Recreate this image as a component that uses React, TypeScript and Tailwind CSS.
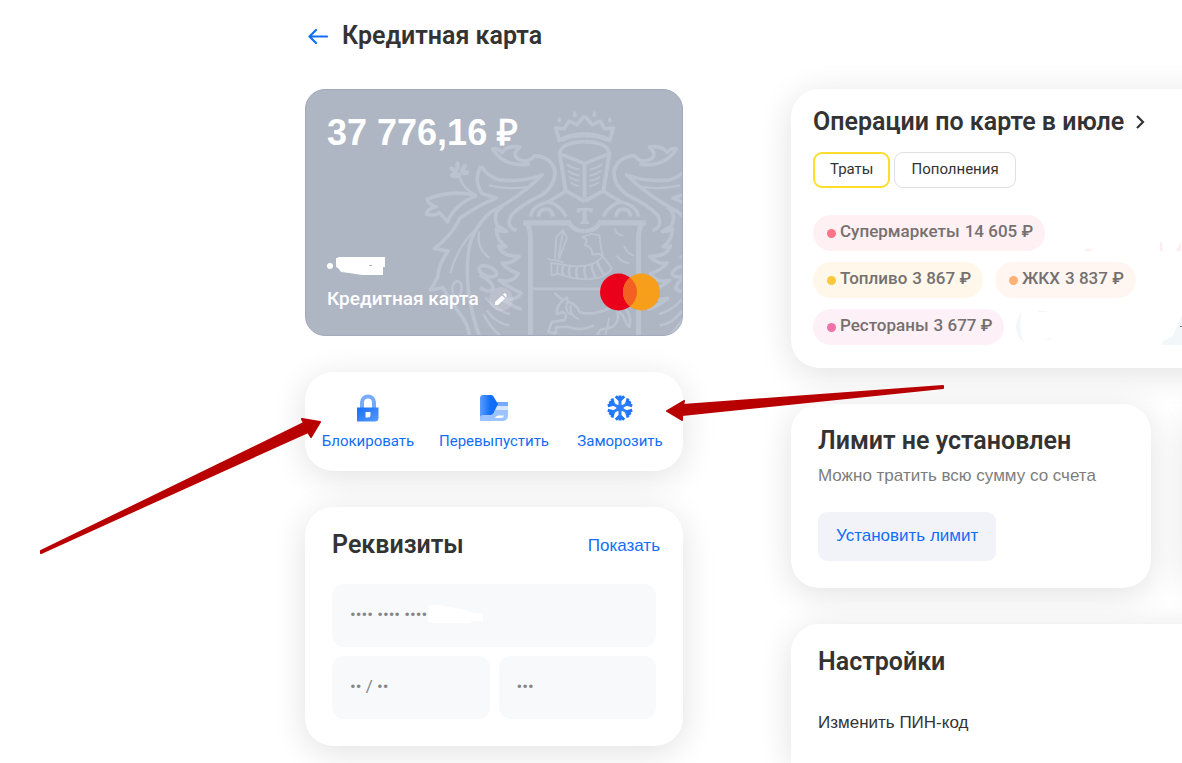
import React from 'react';

interface ActionProps {
  label: string;
  icon: React.ReactNode;
}

interface Expense {
  name: string;
  amount: string;
  bg: string;
  dot: string;
}

const expenseRows: Expense[][] = [
  [{ name: 'Супермаркеты', amount: '14 605 ₽', bg: 'bg-[#fff0f3]', dot: 'bg-[#ff7389]' }],
  [
    { name: 'Топливо', amount: '3 867 ₽', bg: 'bg-[#fff8ea]', dot: 'bg-[#fac83c]' },
    { name: 'ЖКХ', amount: '3 837 ₽', bg: 'bg-[#fff6f1]', dot: 'bg-[#ffb173]' },
  ],
  [{ name: 'Рестораны', amount: '3 677 ₽', bg: 'bg-[#fdf0f6]', dot: 'bg-[#f073a8]' }],
];

const panel = 'bg-white shadow-[0_6px_34px_rgba(0,0,0,0.12)]';
const bodyText = "font-['Liberation_Sans',sans-serif] text-[17px] leading-6";
const field = 'flex h-[63px] items-center rounded-xl bg-[#f8f9fb] px-[18px] pb-[3px]';

const BackIcon = () => (
  <svg width="20" height="16" viewBox="0 0 20 16" fill="none" stroke="#126df7" strokeWidth="2.2" strokeLinecap="round" strokeLinejoin="round">
    <path d="M19 8.500H2M8 2L1.500 8.500L8 15" />
  </svg>
);

const LockIcon = () => (
  <svg width="28" height="28" viewBox="0 0 28 28" fill="none">
    <defs>
      <linearGradient id="lock" x1="0" y1="0" x2="1" y2="1">
        <stop offset="0" stopColor="#126df7" />
        <stop offset="1" stopColor="#5a9bff" />
      </linearGradient>
    </defs>
    <path d="M8 15V8.500a6 6 0 0 1 12 0V15" stroke="#78aafb" strokeWidth="4" />
    <path d="M3 13.500h21.500v10.500a3.500 3.500 0 0 1-3.500 3.500H3z" fill="url(#lock)" />
    <path d="M11.500 18h5v3q0 2.500-2.500 2.500h-2.500z" fill="#fff" />
  </svg>
);

const ReissueIcon = () => (
  <svg width="28" height="28" viewBox="0 0 28 28" fill="none">
    <defs>
      <linearGradient id="folder" x1="0" y1="0" x2="1" y2="0">
        <stop offset="0" stopColor="#5a9bff" />
        <stop offset="0.6" stopColor="#126df7" />
      </linearGradient>
    </defs>
    <path d="M12 8h16v4H12z" fill="#78aafb" />
    <path d="M12 12h16v4H12z" fill="#d6e5ff" />
    <path d="M0 27V24q0-3 3-3h8l4-5h13v5q0 6-6 6z" fill="#9cc3ff" />
    <path d="M0 24V4q0-3 3-3h8q1.500 0 2.300 1.200L18 10l-4.500 9q-1 2-3 2H4q-4 0-4 3z" fill="url(#folder)" />
    <path d="M18 21.500h6q-.5 2.500-3 2.500h-6q0-1.500 3-2.500z" fill="#fff" />
  </svg>
);

const SnowflakeIcon = () => (
  <svg width="28" height="28" viewBox="0 0 28 28" fill="none" stroke="url(#snow)" strokeWidth="3">
    <defs>
      <linearGradient id="snow" gradientUnits="userSpaceOnUse" x1="4" y1="2" x2="16" y2="28">
        <stop offset="0" stopColor="#126df7" />
        <stop offset="1" stopColor="#5a9bff" />
      </linearGradient>
    </defs>
    {[0, 60, 120, 180, 240, 300].map((angle) => (
      <path key={angle} d="M14 14V1.500M9.800 2.300L14 6.500L18.200 2.300" transform={`rotate(${angle} 14 14)`} />
    ))}
    <circle cx="14" cy="14" r="3.500" fill="#2f7ffa" stroke="none" />
  </svg>
);

const CrestHalf = () => (
  <g>
    {/* crown and helmet */}
    <path d="M525 146Q480 146 449 166L438 129L464 131L478 108L502 119L525 92" />
    <path d="M455 168Q480 154 525 153" strokeWidth="7" />
    <path d="M448 94Q456 102 455 108Q449 116 443 108Q442 102 448 94ZM494 76Q504 86 502 92Q495 101 489 92Q489 84 494 76Z" className="fill-current" stroke="none" />
    <path d="M525 170Q455 172 450 206L525 236V340" />
    <path d="M450 206L468 318L525 350" strokeWidth="12" />
    <path d="M472 238Q486 250 510 254M474 258Q488 268 510 272M478 276Q490 286 510 288M482 292Q494 302 510 304" strokeWidth="6" />
    {/* collar */}
    <path d="M468 320L415 352Q368 362 362 396M415 352Q448 358 470 396" />
    <path d="M386 396Q388 374 408 374T430 396" strokeWidth="12" />
    <path d="M525 440Q484 438 476 406" strokeWidth="13" />
    <path d="M340 415H478" strokeWidth="16" />
    <path d="M349 412Q362 432 362 460V760" strokeWidth="15" />
    {/* plumes */}
    <path d="M360 238Q282 248 248 192Q264 188 276 202Q292 180 330 186Q302 210 328 224Q356 236 374 212Q424 216 436 258Q438 302 394 332Q334 360 304 392Q286 426 320 438" />
    <path d="M214 244Q188 284 216 326L258 340Q192 368 150 400Q122 456 72 492L114 500Q84 540 82 580L60 618L98 610Q122 654 150 690Q174 720 178 756" />
    <path d="M214 244Q232 276 270 286Q340 292 398 270Q340 330 240 384Q178 442 174 512Q162 630 208 756" />
    <path d="M236 302Q300 316 350 306M200 432Q146 478 120 566M208 440Q196 490 238 520" strokeWidth="7" />
    <path d="M276 366Q246 386 262 424L290 440Q268 442 260 432Q258 466 288 486Q274 490 266 484Q274 516 328 516Q304 540 276 536Q290 556 326 568Q308 598 268 588Q296 610 334 626Q318 654 274 642Q308 668 336 676" />
    <path d="M208 548Q222 538 248 552Q276 574 242 578Q202 568 208 548M208 572Q246 588 250 612Q238 630 210 610" />
    <path d="M138 590Q160 590 152 626Q134 660 130 632Q120 604 138 590M226 640Q260 680 300 690M230 680Q262 720 298 724M220 690Q244 734 270 754" strokeWidth="8" />
    {/* leaf and flower */}
    <path d="M200 332Q120 314 50 344Q56 362 78 366Q50 372 48 388Q72 396 88 384Q98 396 112 412Q132 360 200 332" />
    <path d="M200 332Q150 306 150 274" strokeWidth="7" />
    <g className="fill-current" stroke="none">
      <ellipse cx="142" cy="243" rx="7" ry="14" />
      <ellipse cx="130" cy="254" rx="14" ry="7" transform="rotate(25 130 254)" />
      <ellipse cx="160" cy="250" rx="15" ry="7" transform="rotate(-60 160 250)" />
      <ellipse cx="164" cy="263" rx="14" ry="8" />
      <ellipse cx="136" cy="271" rx="17" ry="10" />
    </g>
  </g>
);

const Crest = () => (
  <svg className="absolute inset-0 h-full w-full text-[#bbc2d0]" viewBox="0 0 378 247" preserveAspectRatio="xMaxYMax slice" aria-hidden="true">
    <g transform="translate(105 -4) scale(.33333)" fill="none" stroke="currentColor" strokeWidth="11" strokeLinejoin="round">
      <CrestHalf />
      <g transform="translate(1050 0) scale(-1 1)">
        <CrestHalf />
      </g>
      <path d="M502 370H549V384H541L538 378H532V408L539 412V418H512V412L519 408V378H513L510 384H502Z" className="fill-current" stroke="none" />
      <path d="M370 614H690" strokeWidth="8" />
      {/* arm with sword */}
      <path d="M436 522L440 458L460 436L472 460L448 524M460 440L446 520M414 520Q420 530 434 526L462 534M424 536L426 572L442 570L444 538Z" strokeWidth="6" />
      <path d="M444 538Q510 552 546 540Q570 530 580 516M444 568Q510 592 560 582Q592 576 610 550" strokeWidth="6" />
      <path d="M462 540Q454 556 462 574M482 544Q474 560 482 578M504 546Q496 562 504 582M526 544Q522 562 530 582M546 538Q546 556 558 580M562 528Q568 550 584 570" strokeWidth="8" />
      <path d="M580 516Q574 492 570 452L546 448L518 458Q540 462 526 482Q550 488 548 510L570 508L580 516L608 552" strokeWidth="6" />
      <path d="M616 432Q620 452 642 454M644 484Q654 508 674 514M622 514Q640 536 660 536" strokeWidth="6" />
      {/* unicorn */}
      <path d="M434 626L460 648L472 640L474 652Q504 662 510 684Q540 694 586 678Q614 668 620 650Q640 648 650 676Q668 700 660 728Q650 720 644 700Q632 680 624 684Q632 710 610 728L572 738L562 756M460 648Q440 664 442 690L460 684Q476 690 464 708L426 714L416 744L438 748L440 730L476 728Q510 744 554 724" strokeWidth="8" />
      <path d="M474 652Q462 682 486 692M484 662Q476 690 508 706M600 700L588 752" strokeWidth="6" />
    </g>
  </svg>
);

const MastercardLogo = () => (
  <svg width="60" height="38" viewBox="0 0 60 38" role="img" aria-label="Mastercard">
    <circle cx="18.500" cy="19" r="18.500" fill="#eb001b" />
    <circle cx="41.500" cy="19" r="18.500" fill="#f79e1b" />
    <path d="M30 4.500a18.500 18.500 0 0 1 0 29a18.500 18.500 0 0 1 0-29z" fill="#f26122" />
  </svg>
);

const BankCard = () => (
  <section className="relative flex h-[247px] flex-col justify-between overflow-hidden rounded-[20px] border border-[#a2aabc] bg-[#aeb5c3] pt-[21px] pr-[22px] pb-[22px] pl-[21px] text-white">
    <Crest />
    <div className="relative font-['Liberation_Sans',sans-serif] text-4xl leading-[44px] font-bold">37 776,16 ₽</div>
    <div className="relative flex items-end justify-between">
      <div>
        <svg width="60" height="20" viewBox="0 0 60 20" fill="#fff" className="block" aria-hidden="true">
          <circle cx="3" cy="9" r="3" />
          <path d="M9 1H11V0H58V10H56V18H35L22 16L14 15L11 11L9 10Z" />
          <path d="M42 8h3v1h-3z" fill="#aeb5c3" />
        </svg>
        <div className="mt-2 flex items-center gap-[10px]">
          <span className="text-[19px] leading-[28px] font-medium">Кредитная карта</span>
          <button aria-label="Переименовать карту" className="flex size-6 items-center justify-center rounded-full bg-white/15">
            <svg width="14" height="14" viewBox="0 0 14 14" fill="#fff">
              <path d="M1 13V10L8 3.500L11 6.500L4 13ZM9 2.500L10 1.500q1-.6 2 .4t.5 2L12 5.500Z" />
            </svg>
          </button>
        </div>
      </div>
      <div className="pb-[2px]">
        <MastercardLogo />
      </div>
    </div>
  </section>
);

const Action: React.FC<ActionProps> = ({ label, icon }) => (
  <button className="flex flex-1 flex-col items-center gap-[9px] text-[15px] leading-5 text-[#126df7]">
    {icon}
    {label}
  </button>
);

const Requisites = () => (
  <section className={`${panel} rounded-[28px] px-[27px] pt-[22px] pb-[27px]`}>
    <div className="-mr-1 flex items-end justify-between">
      <h2 className="text-[25px] leading-8 font-semibold">Реквизиты</h2>
      <button className={`${bodyText} pb-[3px] text-[#126df7]`}>Показать</button>
    </div>
    <div className="mt-[23px] grid grid-cols-2 gap-[9px] text-[17px] leading-6 text-[#858585]">
      <div className={`${field} col-span-2`}>
        <span>•••• •••• ••••</span>
        <svg width="55" height="20" viewBox="0 0 55 20" fill="#fff" className="ml-[1px]" aria-hidden="true">
          <path d="M0 2L2 1H12L22 3L38 6L44 9L55 10V17H43V19H6L0 18Z" />
        </svg>
      </div>
      <div className={field}>•• / ••</div>
      <div className={field}>•••</div>
    </div>
  </section>
);

const ExpenseChip: React.FC<{ expense: Expense }> = ({ expense }) => (
  <button className={`flex h-9 items-center rounded-full pr-3 pl-[14px] text-[17px] leading-6 font-medium text-[#75706f] ${expense.bg}`}>
    <span className={`mr-1 size-[9px] rounded-full ${expense.dot}`} />
    <span className="flex gap-[5px] pb-1">
      <span>{expense.name}</span>
      <span>{expense.amount}</span>
    </span>
  </button>
);

const Operations = () => (
  <section className={`${panel} rounded-[28px] px-[22px] pt-[17px] pb-[23px]`}>
    <h2>
      <a href="#operations" className="flex items-center gap-3 text-[25px] leading-8 font-semibold">
        Операции по карте в июле
        <svg width="9" height="14" viewBox="0 0 9 14" fill="none" stroke="#333" strokeWidth="2.200">
          <path d="M1 1L7 7L1 13" />
        </svg>
      </a>
    </h2>
    <div className="mt-[14px] flex gap-1 text-[15px] leading-5">
      <button className="h-9 rounded-[9px] border-2 border-[#ffdd2d] px-[15px] pb-[2px]">Траты</button>
      <button className="h-9 rounded-[9px] border border-[#dfe0e2] px-4 pb-[2px]">Пополнения</button>
    </div>
    <div className="mt-[27px] flex flex-col gap-[11px]">
      {expenseRows.map((row, i) => (
        <div key={i} className="flex gap-3">
          {row.map((expense) => (
            <ExpenseChip key={expense.name} expense={expense} />
          ))}
          {i === 0 && (
            <svg width="124" height="36" viewBox="0 0 124 36" fill="#ffeeed" aria-hidden="true">
              <path d="M27 36L31 33L36 36ZM103 27h2l1 9h-3zM124 27V36H119Z" />
            </svg>
          )}
          {i === 2 && (
            <svg width="166" height="36" viewBox="0 0 166 36" fill="#f2f8f9" aria-hidden="true">
              <path d="M6 3Q0 9 0 18T8 34Q2 20 6 3ZM22 2h9v1h-9zM27 31l8-2v2zM145 36L148 31L156 28L166 6V36Z" />
              <path d="M164 17h2v1h-2z" fill="#75706f" />
            </svg>
          )}
        </div>
      ))}
    </div>
  </section>
);

const Limit = () => (
  <section className={`${panel} rounded-[28px] px-[27px] pt-[21px] pb-[27px]`}>
    <h2 className="text-[25px] leading-8 font-semibold">Лимит не установлен</h2>
    <p className={`${bodyText} mt-[7px] text-[#7d7d7d]`}>Можно тратить всю сумму со счета</p>
    <button className={`${bodyText} mt-6 h-[49px] rounded-[9px] bg-[#f2f3f8] px-[18px] pb-[2px] text-[#126df7]`}>
      Установить лимит
    </button>
  </section>
);

const Arrows = () => (
  <svg className="pointer-events-none absolute top-0 left-0" width="960" height="570" viewBox="0 0 960 570" fill="#b90000" stroke="#b90000" strokeWidth="2" strokeLinejoin="round" aria-hidden="true">
    <path d="M41 551L304 423L302 419L320 422L311 437L308 432L41 553Z" />
    <path d="M943 386L683 405L684 401L667 411L682 420L682 415L943 388Z" />
  </svg>
);

export default function App() {
  return (
    <main className="relative flex min-h-screen flex-col overflow-hidden bg-white pl-[305px] font-['Roboto','Liberation_Sans',sans-serif] text-[#333]">
      <header className="flex items-center gap-[14px] pt-5 pl-[3px]">
        <a href="#back" aria-label="Назад">
          <BackIcon />
        </a>
        <h1 className="text-[25px] leading-8 font-semibold">Кредитная карта</h1>
      </header>
      <div className="mt-[37px] flex flex-1 gap-[108px]">
        <div className="flex w-[378px] shrink-0 flex-col gap-9">
          <BankCard />
          <section className={`${panel} flex rounded-[28px] pt-[22px] pb-5`}>
            <Action label="Блокировать" icon={<LockIcon />} />
            <Action label="Перевыпустить" icon={<ReissueIcon />} />
            <Action label="Заморозить" icon={<SnowflakeIcon />} />
          </section>
          <Requisites />
        </div>
        <div className="flex w-[756px] shrink-0 flex-col gap-9">
          <Operations />
          <div className="grid grid-cols-2 gap-9">
            <Limit />
            <section className={`${panel} rounded-[28px]`} />
          </div>
          <section className={`${panel} flex-1 rounded-t-[28px] px-[27px] pt-[22px]`}>
            <h2 className="text-[25px] leading-8 font-semibold">Настройки</h2>
            <button className={`${bodyText} mt-[33px]`}>Изменить ПИН-код</button>
          </section>
        </div>
      </div>
      <Arrows />
    </main>
  );
}
